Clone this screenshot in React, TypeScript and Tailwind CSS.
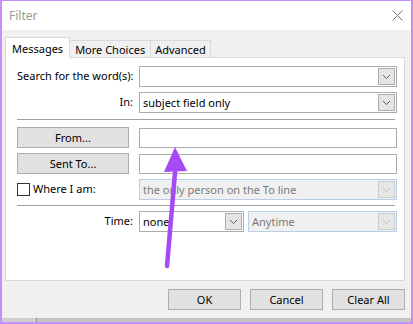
import React from 'react';

const font = { fontFamily: '"Noto Sans", "Open Sans", sans-serif' };

function Chevron({ disabled }: { disabled?: boolean }) {
  return (
    <svg width="9" height="6" viewBox="0 0 9 6">
      <path
        d="M1 1 L4.5 4.5 L8 1"
        fill="none"
        stroke={disabled ? '#bfbfbf' : '#606060'}
        strokeWidth="1"
      />
    </svg>
  );
}

function Combo({
  text,
  disabled,
  className,
}: {
  text?: string;
  disabled?: boolean;
  className?: string;
}) {
  return (
    <div
      className={
        'h-[21px] flex items-center pl-[3px] pr-px border ' +
        (disabled
          ? 'bg-[#f0f0f0] border-[#b9cde5] text-[#7a7a7a] '
          : 'bg-white border-[#acacac] text-black ') +
        (className ?? '')
      }
    >
      <span className="flex-1 whitespace-nowrap overflow-hidden leading-[16px]">{text}</span>
      <div
        className={
          'w-[17px] h-[17px] shrink-0 flex items-center justify-center border ' +
          (disabled ? 'bg-[#e6e6e6] border-[#cccccc]' : 'bg-[#e5e5e5] border-[#acacac]')
        }
      >
        <Chevron disabled={disabled} />
      </div>
    </div>
  );
}

function Field() {
  return <div className="flex-1 h-[20px] bg-white border border-[#acacac]" />;
}

function Btn({ label, className }: { label: string; className?: string }) {
  return (
    <div
      className={
        'h-[21px] flex items-center justify-center bg-[#e1e1e1] border border-[#adadad] text-black leading-none ' +
        (className ?? '')
      }
    >
      {label}
    </div>
  );
}

export default function App() {
  return (
    <div
      className="w-[413px] h-[324px] relative overflow-hidden flex flex-col bg-[#f0f0f0] border-l-2 border-r-2 border-t border-[#c68ef7] text-[11px] whitespace-nowrap"
      style={font}
    >
      {/* Title bar */}
      <div className="h-[29px] bg-white flex items-center justify-between pl-[7px] pr-[8px]">
        <span className="text-[#9a9a9a] text-[12px]">Filter</span>
        <svg width="11" height="11" viewBox="0 0 11 11">
          <path d="M0.5 0.5 L10.5 10.5 M10.5 0.5 L0.5 10.5" stroke="#777" strokeWidth="1" />
        </svg>
      </div>

      {/* Body */}
      <div className="flex-1 flex flex-col pt-[7px] pl-[3px] pr-[6px]">
        {/* Tabs */}
        <div className="h-[20px] flex items-end">
          <div className="h-[21px] relative z-10 -mb-px bg-white border border-b-0 border-[#d9d9d9] px-[6px] flex items-center leading-none">
            Messages
          </div>
          <div className="h-[17px] bg-[#f0f0f0] border border-b-0 border-l-0 border-[#d9d9d9] px-[5px] flex items-center leading-none">
            More Choices
          </div>
          <div className="h-[17px] bg-[#f0f0f0] border border-b-0 border-l-0 border-[#d9d9d9] px-[4px] flex items-center leading-none">
            Advanced
          </div>
        </div>

        {/* Panel */}
        <div className="h-[224px] bg-white border border-[#d9d9d9] pt-[8px] pl-[11px] pr-[7px] flex flex-col">
          <div className="flex items-center">
            <span className="w-[122px] shrink-0">Search for the word(s):</span>
            <Combo className="flex-1" />
          </div>
          <div className="flex items-center mt-[5px]">
            <span className="w-[116px] mr-[6px] shrink-0 text-right">In:</span>
            <Combo className="flex-1" text="subject field only" />
          </div>

          <div className="h-px bg-[#a0a0a0] mt-[6px] mr-[2px]" />

          <div className="flex items-center mt-[7px]">
            <Btn label="From..." className="w-[112px] mr-[10px] shrink-0" />
            <Field />
          </div>
          <div className="flex items-center mt-[5px]">
            <Btn label="Sent To..." className="w-[112px] mr-[10px] shrink-0" />
            <Field />
          </div>
          <div className="flex items-center mt-[5px]">
            <div className="w-[122px] shrink-0 flex items-center">
              <div className="w-[13px] h-[13px] border border-[#333] bg-white mr-[3px]" />
              <span>Where I am:</span>
            </div>
            <Combo className="flex-1" disabled text="the only person on the To line" />
          </div>

          <div className="h-px bg-[#a0a0a0] mt-[5px] mr-[2px]" />

          <div className="flex items-center mt-[5px]">
            <span className="w-[116px] mr-[6px] shrink-0 text-right">Time:</span>
            <Combo className="w-[105px] mr-[4px]" text="none" />
            <Combo className="flex-1" disabled text="Anytime" />
          </div>
        </div>

        {/* Buttons */}
        <div className="flex justify-end gap-[9px] mt-[8px]">
          <Btn label="OK" className="w-[73px]" />
          <Btn label="Cancel" className="w-[73px]" />
          <Btn label="Clear All" className="w-[73px]" />
        </div>
      </div>

      {/* Bottom strip */}
      <div className="h-[4px] flex">
        <div className="w-[35px] bg-[#cfcfcf] border-r border-[#8a8a8a]" />
        <div className="flex-1 bg-[#c4c4c4]" />
      </div>
      <div className="h-[2px] bg-[#c68ef7]" />

      {/* Annotation arrow */}
      <svg
        className="absolute left-0 top-0 pointer-events-none"
        width="413"
        height="324"
        viewBox="0 0 413 324"
      >
        <path d="M174 160 L165 265" stroke="#a64af5" strokeWidth="4.5" strokeLinecap="round" />
        <polygon points="173,146 162,171 185,170" fill="#a64af5" />
      </svg>
    </div>
  );
}
